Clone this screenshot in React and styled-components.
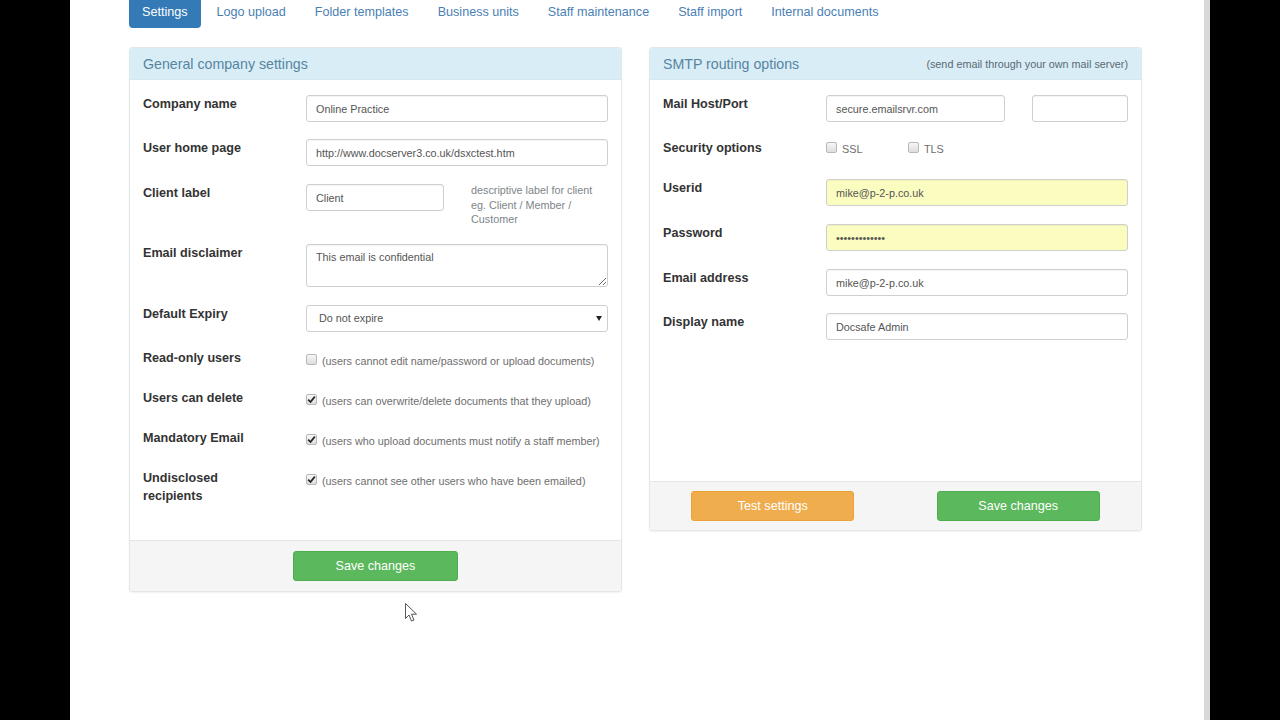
import React from "react";
import styled, { createGlobalStyle } from "styled-components";

const GlobalStyle = createGlobalStyle`
  html, body {
    margin: 0;
    padding: 0;
    background: #000;
    font-family: "Liberation Sans", Arial, sans-serif;
  }
  * { box-sizing: border-box; }
`;

const Main = styled.div`
  position: relative;
  margin-left: 70px;
  width: 1140px;
  height: 720px;
  overflow: hidden;
  background: #fff;
  border-right: 6px solid #d9d9d9;
  padding-left: 59px;
`;

const Nav = styled.ul`
  display: flex;
  list-style: none;
  margin: 0;
  padding: 0;
  gap: 3px;
`;

const NavLink = styled.li`
  font-size: 12.6px;
  line-height: 16px;
  padding: 4px 13px 8px;
  border-radius: 0 0 4px 4px;
  color: ${p => (p.$active ? "#fff" : "#4a7fb5")};
  background: ${p => (p.$active ? "#337ab7" : "transparent")};
  cursor: pointer;
`;

const Columns = styled.div`
  display: grid;
  grid-template-columns: 493px 493px;
  column-gap: 27px;
  align-items: start;
  margin-top: 19px;
`;

const Panel = styled.section`
  border: 1px solid #e2e8ea;
  border-radius: 3px;
  background: #fff;
  box-shadow: 0 1px 2px rgba(0, 0, 0, 0.06);
  overflow: hidden;
`;

const PanelHeading = styled.header`
  display: flex;
  align-items: center;
  justify-content: space-between;
  height: 32px;
  padding: 0 13px;
  background: #d9edf7;
  border-bottom: 1px solid #d3e8f2;
`;

const PanelTitle = styled.h3`
  margin: 0;
  font-size: 14.2px;
  font-weight: normal;
  color: #57859f;
`;

const HeadingNote = styled.span`
  font-size: 10.8px;
  color: #5a6a72;
`;

const PanelBody = styled.div`
  padding: 15px 13px ${p => p.$bottom || "0"};
  min-height: ${p => p.$minHeight || "0"};
`;

const Row = styled.div`
  display: grid;
  grid-template-columns: 163px 302px;
  min-height: 22px;
  margin-bottom: ${p => p.$gap || "17px"};
`;

const Label = styled.label`
  font-size: 12.6px;
  font-weight: bold;
  line-height: 18px;
  color: #333;
  width: ${p => p.$width || "auto"};
`;

const Input = styled.input`
  width: ${p => p.$width || "100%"};
  height: 27px;
  padding: 0 9px;
  font-family: inherit;
  font-size: 10.8px;
  color: #555;
  border: 1px solid #cfcfcf;
  border-radius: 3px;
  background: ${p => (p.$autofill ? "#fafdbf" : "#fff")};
  box-shadow: inset 0 1px 1px rgba(0, 0, 0, 0.05);
  outline: none;
`;

const TextArea = styled.textarea`
  width: 100%;
  height: 43px;
  padding: 6px 9px;
  font-family: inherit;
  font-size: 10.8px;
  color: #555;
  border: 1px solid #cfcfcf;
  border-radius: 3px;
  box-shadow: inset 0 1px 1px rgba(0, 0, 0, 0.05);
  outline: none;
  display: block;
`;

const InlineGroup = styled.div`
  display: flex;
  align-items: flex-start;
  gap: ${p => p.$gap || "27px"};
`;

const HelpText = styled.div`
  width: 128px;
  font-size: 10.8px;
  line-height: 14.5px;
  color: #7d8589;
  margin-top: -1px;
`;

const SelectWrap = styled.div`
  position: relative;
`;

const Select = styled.select`
  appearance: none;
  width: 100%;
  height: 27px;
  padding: 0 12px;
  font-family: inherit;
  font-size: 10.8px;
  color: #555;
  background: #fff;
  border: 1px solid #cfcfcf;
  border-radius: 3px;
  outline: none;
`;

const SelectArrow = styled.svg`
  position: absolute;
  right: 6px;
  top: 11px;
  pointer-events: none;
`;

const CheckLine = styled.div`
  display: flex;
  align-items: center;
  gap: 5px;
  padding-top: 2px;
  height: 22px;
  align-self: start;
`;

const CheckGroup = styled.div`
  display: flex;
  align-items: center;
  height: 22px;
  padding-bottom: 2px;
`;

const CheckOption = styled.span`
  display: flex;
  align-items: center;
  gap: 5px;
  width: ${p => p.$width || "auto"};
`;

const Box = styled.span`
  display: inline-flex;
  align-items: center;
  justify-content: center;
  width: 11px;
  height: 11px;
  border: 1px solid #b8b8b8;
  border-radius: 2px;
  background: linear-gradient(#f6f6f6, #dedede);
  flex-shrink: 0;
  margin-top: -3px;
`;

const CheckText = styled.span`
  font-size: 10.8px;
  color: #6e6e6e;
`;

const PanelFooter = styled.footer`
  display: grid;
  grid-template-columns: ${p => p.$cols || "1fr"};
  justify-items: center;
  padding: ${p => p.$pad || "10px"} 0;
  background: #f5f5f5;
  border-top: 1px solid #e6e6e6;
`;

const Button = styled.button`
  width: ${p => p.$width || "165px"};
  height: 30px;
  border: 1px solid ${p => (p.$kind === "warning" ? "#eea236" : "#4cae4c")};
  border-radius: 3px;
  background: ${p => (p.$kind === "warning" ? "#f0ad4e" : "#5cb85c")};
  color: #fff;
  font-family: inherit;
  font-size: 12.6px;
  cursor: pointer;
`;

const Cursor = styled.svg`
  position: absolute;
  left: 335px;
  top: 603px;
`;

const Check = ({ checked }) => (
  <Box>
    {checked && (
      <svg width="9" height="9" viewBox="0 0 9 9">
        <path d="M1.2 4.6 L3.5 7 L7.8 1.6" fill="none" stroke="#222" strokeWidth="1.7" />
      </svg>
    )}
  </Box>
);

const tabs = [
  "Settings",
  "Logo upload",
  "Folder templates",
  "Business units",
  "Staff maintenance",
  "Staff import",
  "Internal documents",
];

const options = [
  { label: "Read-only users", text: "(users cannot edit name/password or upload documents)", checked: false },
  { label: "Users can delete", text: "(users can overwrite/delete documents that they upload)", checked: true },
  { label: "Mandatory Email", text: "(users who upload documents must notify a staff member)", checked: true },
  { label: "Undisclosed recipients", text: "(users cannot see other users who have been emailed)", checked: true, wrap: true },
];

const App = () => {
  return (
    <>
      <GlobalStyle />
      <Main>
        <Nav>
          {tabs.map((t, i) => (
            <NavLink key={t} $active={i === 0}>
              {t}
            </NavLink>
          ))}
        </Nav>

        <Columns>
          <Panel>
            <PanelHeading>
              <PanelTitle>General company settings</PanelTitle>
            </PanelHeading>
            <PanelBody $bottom="35px">
              <Row>
                <Label>Company name</Label>
                <Input defaultValue="Online Practice" />
              </Row>
              <Row $gap="18px">
                <Label>User home page</Label>
                <Input defaultValue="http://www.docserver3.co.uk/dsxctest.htm" />
              </Row>
              <Row>
                <Label>Client label</Label>
                <InlineGroup>
                  <Input $width="138px" defaultValue="Client" />
                  <HelpText>descriptive label for client eg. Client / Member / Customer</HelpText>
                </InlineGroup>
              </Row>
              <Row $gap="18px">
                <Label>Email disclaimer</Label>
                <TextArea defaultValue="This email is confidential" />
              </Row>
              <Row>
                <Label>Default Expiry</Label>
                <SelectWrap>
                  <Select defaultValue="never">
                    <option value="never">Do not expire</option>
                  </Select>
                  <SelectArrow width="6" height="5" viewBox="0 0 6 5">
                    <path d="M0 0 H6 L3 5 Z" fill="#222" />
                  </SelectArrow>
                </SelectWrap>
              </Row>
              {options.map((o, i) => (
                <Row key={o.label} $gap={i === options.length - 1 ? "0" : "18px"}>
                  <Label $width={o.wrap ? "100px" : "auto"}>{o.label}</Label>
                  <CheckLine>
                    <Check checked={o.checked} />
                    <CheckText>{o.text}</CheckText>
                  </CheckLine>
                </Row>
              ))}
            </PanelBody>
            <PanelFooter>
              <Button $kind="success">Save changes</Button>
            </PanelFooter>
          </Panel>

          <Panel>
            <PanelHeading>
              <PanelTitle>SMTP routing options</PanelTitle>
              <HeadingNote>(send email through your own mail server)</HeadingNote>
            </PanelHeading>
            <PanelBody $minHeight="401px">
              <Row>
                <Label>Mail Host/Port</Label>
                <InlineGroup>
                  <Input $width="179px" defaultValue="secure.emailsrvr.com" />
                  <Input $width="96px" defaultValue="" />
                </InlineGroup>
              </Row>
              <Row $gap="18px">
                <Label>Security options</Label>
                <CheckGroup>
                  <CheckOption $width="82px">
                    <Check checked={false} />
                    <CheckText>SSL</CheckText>
                  </CheckOption>
                  <CheckOption>
                    <Check checked={false} />
                    <CheckText>TLS</CheckText>
                  </CheckOption>
                </CheckGroup>
              </Row>
              <Row $gap="18px">
                <Label>Userid</Label>
                <Input $autofill defaultValue="mike@p-2-p.co.uk" />
              </Row>
              <Row $gap="18px">
                <Label>Password</Label>
                <Input $autofill type="password" defaultValue="mikepassword1" />
              </Row>
              <Row $gap="17px">
                <Label>Email address</Label>
                <Input defaultValue="mike@p-2-p.co.uk" />
              </Row>
              <Row $gap="0">
                <Label>Display name</Label>
                <Input defaultValue="Docsafe Admin" />
              </Row>
            </PanelBody>
            <PanelFooter $cols="1fr 1fr" $pad="9px">
              <Button $kind="warning" $width="163px">Test settings</Button>
              <Button $kind="success" $width="163px">Save changes</Button>
            </PanelFooter>
          </Panel>
        </Columns>

        <Cursor width="13" height="20" viewBox="0 0 13 20">
          <path
            d="M0.5 0.5 L0.5 15.5 L4 12 L6.5 18 L9 17 L6.5 11.2 L11.5 11.2 Z"
            fill="#fff"
            stroke="#555"
            strokeWidth="1"
          />
        </Cursor>
      </Main>
    </>
  );
};

export default App;
